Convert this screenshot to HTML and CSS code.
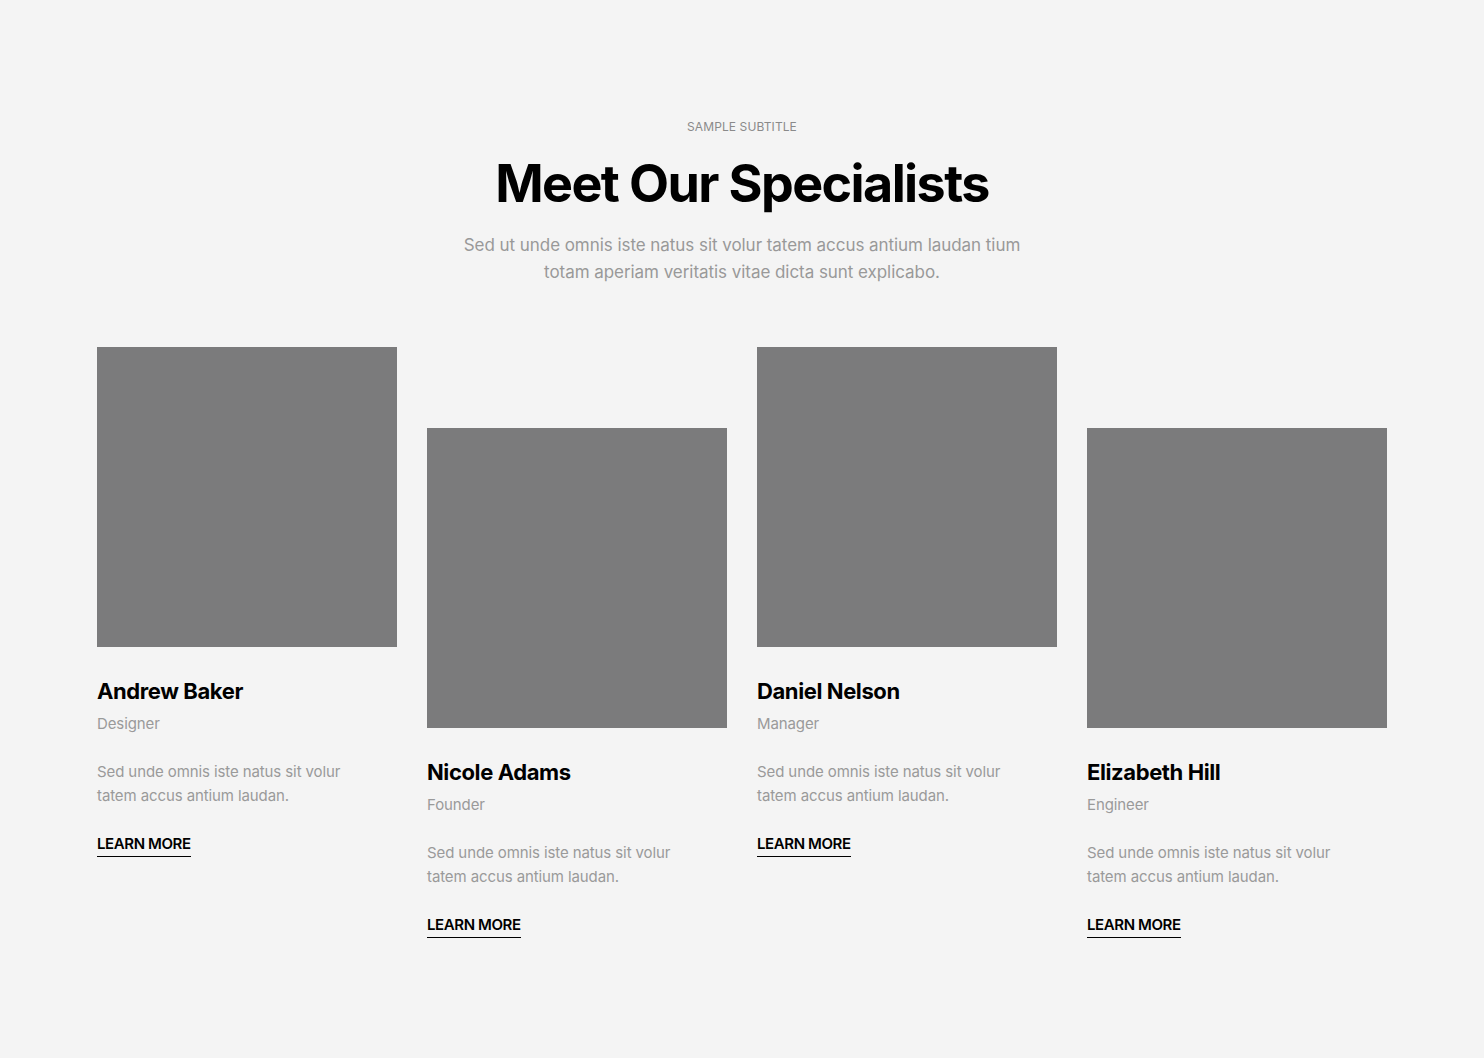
FILE: index.html
```html
<!DOCTYPE html>
<html lang="en">
<head>
<meta charset="utf-8">
<title>Meet Our Specialists</title>
<link rel="stylesheet" href="styles.css">
</head>
<body>
<section class="team">
  <header class="team-head">
    <p class="subtitle">SAMPLE SUBTITLE</p>
    <h1 class="title">Meet Our Specialists</h1>
    <p class="lead">Sed ut unde omnis iste natus sit volur tatem accus antium laudan tium totam aperiam veritatis vitae dicta sunt explicabo.</p>
  </header>
  <div class="grid">
    <article class="card">
      <div class="photo"></div>
      <h2 class="name">Andrew Baker</h2>
      <p class="role">Designer</p>
      <p class="desc">Sed unde omnis iste natus sit volur tatem accus antium laudan.</p>
      <a class="more" href="#">LEARN MORE</a>
    </article>
    <article class="card card-low">
      <div class="photo"></div>
      <h2 class="name">Nicole Adams</h2>
      <p class="role">Founder</p>
      <p class="desc">Sed unde omnis iste natus sit volur tatem accus antium laudan.</p>
      <a class="more" href="#">LEARN MORE</a>
    </article>
    <article class="card">
      <div class="photo"></div>
      <h2 class="name">Daniel Nelson</h2>
      <p class="role">Manager</p>
      <p class="desc">Sed unde omnis iste natus sit volur tatem accus antium laudan.</p>
      <a class="more" href="#">LEARN MORE</a>
    </article>
    <article class="card card-low">
      <div class="photo"></div>
      <h2 class="name">Elizabeth Hill</h2>
      <p class="role">Engineer</p>
      <p class="desc">Sed unde omnis iste natus sit volur tatem accus antium laudan.</p>
      <a class="more" href="#">LEARN MORE</a>
    </article>
  </div>
</section>
</body>
</html>
```
FILE: styles.css
```css
html, body {
  margin: 0;
  padding: 0;
  background: #f4f4f4;
}
body {
  font-family: Inter, "Noto Sans", "Liberation Sans", sans-serif;
  color: #000;
}
.team {
  width: 1290px;
  margin: 0 auto;
  padding: 119px 0 120px;
}
.team-head {
  text-align: center;
}
.subtitle {
  margin: 0;
  font-size: 12px;
  line-height: 16px;
  color: #8a8a8a;
  letter-spacing: 0.1px;
}
.title {
  margin: 19px 0 0;
  font-size: 52px;
  line-height: 60px;
  font-weight: 700;
  letter-spacing: -1.6px;
}
.lead {
  width: 600px;
  margin: 18px auto 0;
  font-size: 17px;
  line-height: 27px;
  color: #999;
  letter-spacing: -0.05px;
}
.grid {
  display: grid;
  grid-template-columns: repeat(4, 300px);
  column-gap: 30px;
  margin-top: 61px;
  align-items: start;
}
.card-low {
  margin-top: 81px;
}
.photo {
  width: 300px;
  height: 300px;
  background: #7b7b7c;
}
.name {
  margin: 30px 0 0;
  font-size: 22px;
  line-height: 28px;
  font-weight: 650;
  letter-spacing: -0.4px;
}
.role {
  margin: 9px 0 0;
  font-size: 15px;
  line-height: 20px;
  color: #9a9a9a;
  letter-spacing: -0.1px;
}
.desc {
  max-width: 260px;
  margin: 26px 0 0;
  font-size: 15px;
  line-height: 24px;
  color: #9a9a9a;
  letter-spacing: -0.1px;
}
.more {
  display: inline-block;
  margin-top: 26px;
  font-size: 15px;
  line-height: 20px;
  font-weight: 600;
  color: #000;
  text-decoration: none;
  letter-spacing: -0.4px;
  border-bottom: 1px solid #000;
  padding-bottom: 2px;
}
```
